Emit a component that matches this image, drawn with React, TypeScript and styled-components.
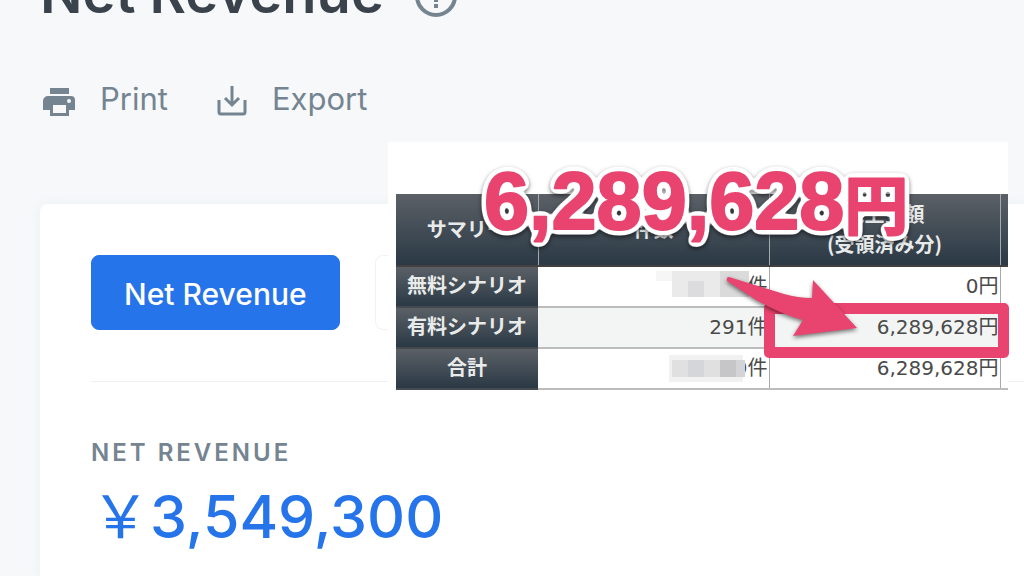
import React from "react";
import styled, { createGlobalStyle } from "styled-components";

const PINK = "#e9446f";
const BLUE = "#2674e9";
const SLATE = "#748490";

const GlobalStyle = createGlobalStyle`
  *, *::before, *::after { box-sizing: border-box; }
  body {
    margin: 0;
    background: #f6f8fa;
    color: #3a424c;
    font-family: Inter, "Noto Sans CJK JP", sans-serif;
  }
`;

const Page = styled.main`
  position: relative;
  display: flex;
  flex-direction: column;
  min-height: 100vh;
  overflow: hidden;
`;

const Header = styled.header`
  display: flex;
  align-items: flex-end;
  gap: 30px;
  height: 21px;
  padding-left: 40px;
`;

const Title = styled.h1`
  margin: 0;
  font-size: 56px;
  font-weight: 600;
  line-height: 56px;
`;

const HelpButton = styled.button`
  display: flex;
  padding: 0 0 3px;
  border: 0;
  background: none;
  color: ${SLATE};
`;

const Toolbar = styled.nav`
  display: flex;
  align-items: center;
  gap: 48px;
  padding: 58px 40px 0;
`;

const ToolButton = styled.button`
  display: flex;
  align-items: center;
  gap: 24px;
  padding: 0;
  border: 0;
  background: none;
  color: ${SLATE};
  font: 400 31px/40px Inter, sans-serif;
`;

const Card = styled.section`
  flex: 1;
  margin: 85px 0 0 40px;
  padding: 51px 0 0 51px;
  border-top-left-radius: 8px;
  background: #fff;
  box-shadow: 0 0 12px #eceff1;
`;

const Tabs = styled.div`
  display: flex;
  gap: 35px;
  padding-bottom: 51px;
  border-bottom: 1px solid #eef0f2;
`;

const Tab = styled.button<{ $active?: boolean }>`
  height: 75px;
  padding: 2px 32px 0;
  border: 1px solid ${(p) => (p.$active ? BLUE : "#f1f2f3")};
  border-radius: 8px;
  background: ${(p) => (p.$active ? BLUE : "#fff")};
  color: ${(p) => (p.$active ? "#fff" : SLATE)};
  font: 500 30px/40px Inter, sans-serif;
`;

const Metric = styled.dl`
  margin: 55px 0 0;
`;

const MetricLabel = styled.dt`
  color: ${SLATE};
  font-size: 24px;
  font-weight: 600;
  line-height: 32px;
  letter-spacing: 3px;
`;

const MetricValue = styled.dd`
  margin: 12px 0 0;
  color: ${BLUE};
  font-size: 59px;
  font-weight: 500;
  line-height: 72px;
`;

const Yen = styled.span`
  font-family: "Noto Sans CJK JP", sans-serif;
  font-weight: 400;
  line-height: 64px;
`;

const Overlay = styled.aside`
  position: absolute;
  top: 142px;
  left: 388px;
  right: 16px;
  padding: 52px 0 2px 8px;
  background: #fff;
`;

const Summary = styled.table`
  width: 100%;
  table-layout: fixed;
  border-collapse: collapse;
  font: 400 20px/26px "DejaVu Sans", "Noto Sans CJK JP", sans-serif;
  color: #4a4a4a;
`;

const slateGradient = `
  background: linear-gradient(#5b6066, #2a3945);
  color: #e9ebeb;
  font-weight: 700;
  font-family: "Noto Sans CJK JP", sans-serif;
`;

const ColHead = styled.th`
  ${slateGradient}
  height: 72px;
  padding: 2px 0 4px;
  line-height: 30px;
  border-right: 1px solid #a5a9ac;
  border-bottom: 2px solid #454040;
  &:last-child { border-right: 0; }
`;

const RowHead = styled.th`
  ${slateGradient}
  height: 41px;
  padding: 0 0 4px;
  border-bottom: 2px solid #454a4e;
`;

const Row = styled.tr<{ $shaded?: boolean }>`
  background: ${(p) => (p.$shaded ? "#f3f5f5" : "#fff")};
`;

const Cell = styled.td`
  padding: 0 1px 2px 0;
  border-right: 1px solid #a9a9ad;
  border-bottom: 2px solid #bcbcbc;
  text-align: right;
  white-space: nowrap;
  &:last-child { border-right: 0; }
`;

const Highlight = styled.div`
  position: absolute;
  top: 161px;
  right: -1px;
  width: 245px;
  height: 55px;
  border: 11px solid ${PINK};
  border-radius: 5px;
`;

const Drawing = styled.svg`
  position: absolute;
  top: 0;
  left: 0;
  pointer-events: none;
`;

const ShadowDrawing = styled(Drawing)`
  filter: drop-shadow(0 2px 2px #00000088);
`;

const CalloutText = styled.text`
  fill: ${PINK};
  stroke: ${PINK};
  stroke-width: 2px;
  stroke-linejoin: round;
  font: 700 81px "Liberation Sans", sans-serif;
`;

const CalloutUnit = styled.tspan`
  font-family: "Noto Sans CJK JP", sans-serif;
  font-size: 64px;
  font-weight: 700;
`;

const PrintIcon = () => (
  <svg width="36" height="36" viewBox="0 -3 36 36" fill="currentColor" aria-hidden="true">
    <path d="M10 4h19v6H10zM8 12h23a4 4 0 0 1 4 4v10h-6v6H10v-6H3v-9a5 5 0 0 1 5-5zm5 9v8h13v-8zm16-6a2 2 0 1 0 0 4 2 2 0 0 0 0-4z" fillRule="evenodd" />
  </svg>
);

const ExportIcon = () => (
  <svg width="32" height="36" viewBox="0 -2 32 36" fill="none" stroke="currentColor" strokeWidth="3" aria-hidden="true">
    <path d="M3 17v12q0 2 2 2h22q2 0 2-2V17M16 3v19M9 15l7 7 7-7" />
  </svg>
);

const HelpIcon = () => (
  <svg width="44" height="44" viewBox="0 0 44 44" fill="none" stroke="currentColor" strokeWidth="4" aria-hidden="true">
    <circle cx="22" cy="22" r="19" />
    <path d="M16 17a6 6 0 1 1 9 4q-3 2-3 7M22 30v4" />
  </svg>
);

export default function App() {
  return (
    <>
      <GlobalStyle />
      <Page>
        <Header>
          <Title>Net Revenue</Title>
          <HelpButton aria-label="Help"><HelpIcon /></HelpButton>
        </Header>
        <Toolbar>
          <ToolButton><PrintIcon />Print</ToolButton>
          <ToolButton><ExportIcon />Export</ToolButton>
        </Toolbar>
        <Card>
          <Tabs>
            <Tab $active>Net Revenue</Tab>
            <Tab aria-label="Other report" />
          </Tabs>
          <Metric>
            <MetricLabel>NET REVENUE</MetricLabel>
            <MetricValue><Yen>￥</Yen>3,549,300</MetricValue>
          </Metric>
        </Card>
        <Overlay>
          <Summary>
            <colgroup>
              <col style={{ width: 142 }} />
              <col />
              <col />
              <col style={{ width: 8 }} />
            </colgroup>
            <thead>
              <tr>
                <ColHead>サマリー</ColHead>
                <ColHead>件数</ColHead>
                <ColHead>売上金額<br />(受領済み分)</ColHead>
                <ColHead />
              </tr>
            </thead>
            <tbody>
              <Row>
                <RowHead>無料シナリオ</RowHead>
                <Cell>件</Cell>
                <Cell>0円</Cell>
                <Cell />
              </Row>
              <Row $shaded>
                <RowHead>有料シナリオ</RowHead>
                <Cell>291件</Cell>
                <Cell>6,289,628円</Cell>
                <Cell />
              </Row>
              <Row>
                <RowHead>合計</RowHead>
                <Cell>9件</Cell>
                <Cell>6,289,628円</Cell>
                <Cell />
              </Row>
            </tbody>
          </Summary>
          <Drawing width="400" height="250" viewBox="0 0 400 250" aria-hidden="true">
            <path fill="#f6f6f6" d="M268 129h16v10h-16z" />
            <path fill="#eaeaeb" d="M284 129h48v26h-48z" />
            <path fill="#dcdcdf" d="M300 139h16v16h-16z" />
            <path fill="#dadadb" d="M332 129h29v26h-29z" />
            <path fill="#f1f1f1" d="M281 213h74v27h-74z" />
            <path fill="#e0e0e1" d="M284 218h48v17h-48z" />
            <path fill="#d4d6da" d="M300 218h16v17h-16z" />
            <path fill="#c6c5c8" d="M332 218h16v17h-16z" />
            <path fill="#d4d4d6" d="M348 218h9v17h-9z" />
          </Drawing>
          <Highlight />
          <ShadowDrawing width="620" height="250" viewBox="0 0 620 250" aria-hidden="true">
            <path fill={PINK} d="M341 135L396 152Q410 156 424 156L425 138 469 186 405 194 415 178Q395 173 368 158L339 139q-1-4 2-4z" />
          </ShadowDrawing>
          <ShadowDrawing width="620" height="250" viewBox="0 0 620 250">
            <defs>
              <filter id="outline" x="-5%" y="-20%" width="110%" height="140%" colorInterpolationFilters="sRGB">
                <feGaussianBlur in="SourceAlpha" stdDeviation="3" result="spread" />
                <feComponentTransfer in="spread" result="edge">
                  <feFuncR type="linear" slope="0" intercept="1" />
                  <feFuncG type="linear" slope="0" intercept="1" />
                  <feFuncB type="linear" slope="0" intercept="1" />
                  <feFuncA type="linear" slope="20" intercept="-1" />
                </feComponentTransfer>
                <feMerge>
                  <feMergeNode in="edge" />
                  <feMergeNode in="SourceGraphic" />
                </feMerge>
              </filter>
            </defs>
            <CalloutText x="96" y="87" filter="url(#outline)">6,289,628<CalloutUnit>円</CalloutUnit></CalloutText>
          </ShadowDrawing>
        </Overlay>
      </Page>
    </>
  );
}
